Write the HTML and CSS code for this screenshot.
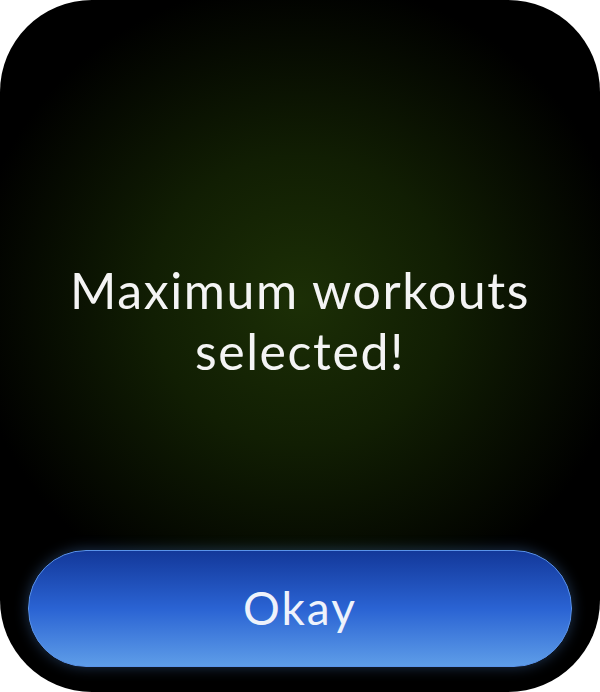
FILE: index.html
```html
<!DOCTYPE html>
<html lang="en">
<head>
  <meta charset="UTF-8">
  <meta name="viewport" content="width=device-width, initial-scale=1.0">
  <title>Maximum workouts</title>
  <link rel="stylesheet" href="styles.css">
</head>
<body>
  <div class="screen">
    <div class="message">
      <p>Maximum workouts<br>selected!</p>
    </div>
    <button class="okay">Okay</button>
  </div>
</body>
</html>
```

FILE: styles.css
```css
* {
  margin: 0;
  padding: 0;
  box-sizing: border-box;
}

html, body {
  width: 600px;
  height: 692px;
  background: #fff;
  overflow: hidden;
}

body {
  font-family: 'Lato', 'Noto Sans', sans-serif;
}

.screen {
  width: 600px;
  height: 692px;
  border-radius: 92px;
  background: radial-gradient(ellipse 330px 320px at 300px 300px, #1c2f06 0%, #111e03 45%, #000 100%);
  display: flex;
  flex-direction: column;
  align-items: center;
  padding: 0 28px 25px;
}

.message {
  flex: 1;
  display: flex;
  align-items: center;
  justify-content: center;
  padding-top: 92px;
}

.message p {
  color: #f4f4f4;
  font-size: 50px;
  line-height: 61px;
  text-align: center;
  letter-spacing: 1.6px;
}

.okay {
  width: 100%;
  height: 117px;
  border-radius: 58px;
  border: 1.5px solid #5a93ea;
  background: linear-gradient(180deg, #13389a 0%, #2a63d3 50%, #5e9de8 100%);
  box-shadow: 0 0 14px rgba(90, 150, 230, 0.35);
  color: #eef2fb;
  font-family: 'Lato', 'Noto Sans', sans-serif;
  font-size: 46px;
  letter-spacing: 2px;
  padding-bottom: 2px;
  cursor: pointer;
}
```
